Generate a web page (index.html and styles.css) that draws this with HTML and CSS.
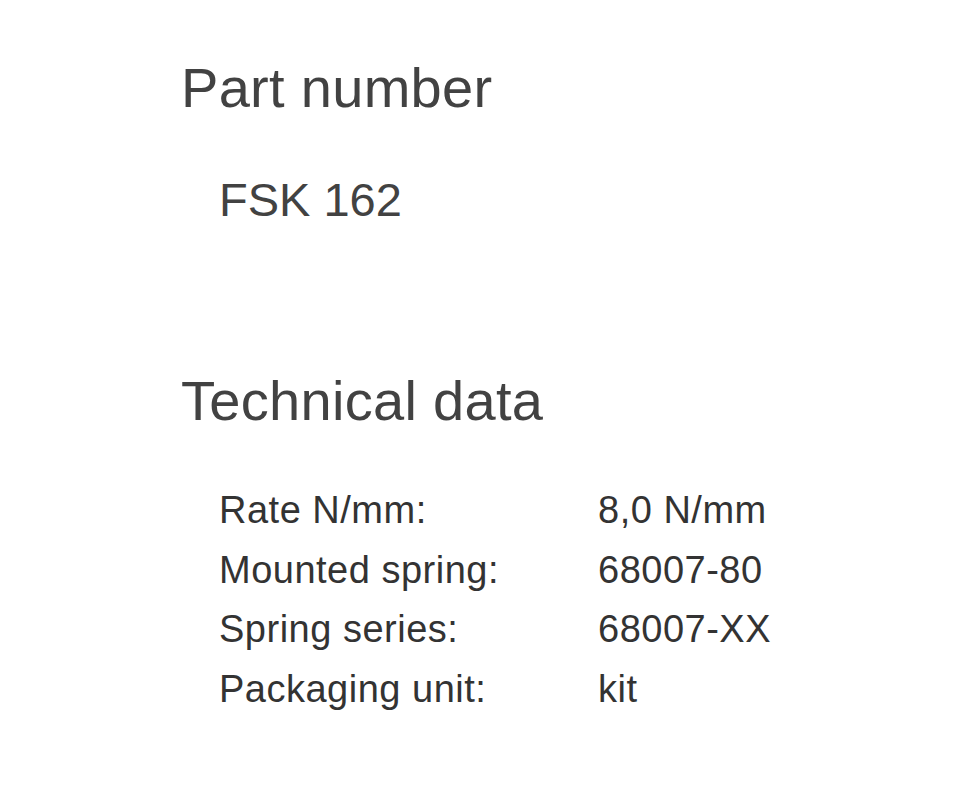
FILE: index.html
```html
<!DOCTYPE html>
<html lang="en">
<head>
<meta charset="utf-8">
<title>FSK 162</title>
<link rel="stylesheet" href="styles.css">
</head>
<body>
<main class="product">
  <section class="block">
    <h1 class="heading">Part number</h1>
    <p class="part-value">FSK 162</p>
  </section>
  <section class="block tech">
    <h2 class="heading">Technical data</h2>
    <dl class="specs">
      <dt>Rate N/mm:</dt><dd>8,0 N/mm</dd>
      <dt>Mounted spring:</dt><dd>68007-80</dd>
      <dt>Spring series:</dt><dd>68007-XX</dd>
      <dt>Packaging unit:</dt><dd>kit</dd>
    </dl>
  </section>
</main>
</body>
</html>
```
FILE: styles.css
```css
html, body {
  margin: 0;
  padding: 0;
  background: #ffffff;
}
body {
  font-family: "Liberation Sans", Arial, sans-serif;
  color: #363636;
}
.product {
  padding: 56px 0 0 181px;
}
.heading {
  margin: 0;
  font-size: 56px;
  line-height: 64px;
  font-weight: 400;
  letter-spacing: 0.3px;
  color: #424242;
}
.part-value {
  margin: 53px 0 0 0;
  padding-left: 38px;
  font-size: 47px;
  line-height: 54px;
  color: #424242;
}
.tech {
  margin-top: 142px;
}
.specs {
  margin: 48px 0 0 0;
  padding-left: 38px;
  display: grid;
  grid-template-columns: 379px auto;
  font-size: 38px;
  line-height: 59.7px;
  letter-spacing: 0.5px;
  color: #333333;
}
.specs dt, .specs dd {
  margin: 0;
}
```
